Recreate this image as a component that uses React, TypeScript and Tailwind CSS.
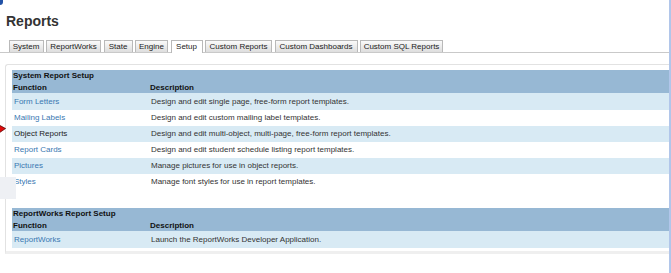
import React from "react";

const tabs = [
  { label: "System", w: "w-[35px]" },
  { label: "ReportWorks", w: "w-[55px]" },
  { label: "State", w: "w-[29px]" },
  { label: "Engine", w: "w-[33px]" },
  { label: "Setup", w: "w-[32px]", active: true },
  { label: "Custom Reports", w: "w-[67px]" },
  { label: "Custom Dashboards", w: "w-[83px]" },
  { label: "Custom SQL Reports", w: "w-[83px]" },
];

type Row = { fn: string; desc: string; dark?: boolean };

const systemRows: Row[] = [
  { fn: "Form Letters", desc: "Design and edit single page, free-form report templates." },
  { fn: "Mailing Labels", desc: "Design and edit custom mailing label templates." },
  { fn: "Object Reports", desc: "Design and edit multi-object, multi-page, free-form report templates.", dark: true },
  { fn: "Report Cards", desc: "Design and edit student schedule listing report templates." },
  { fn: "Pictures", desc: "Manage pictures for use in object reports." },
  { fn: "Styles", desc: "Manage font styles for use in report templates." },
];

const rwRows: Row[] = [{ fn: "ReportWorks", desc: "Launch the ReportWorks Developer Application." }];

function Table({ title, rows, heights }: { title: string; rows: Row[]; heights: string[] }) {
  return (
    <div className="w-[657px]">
      <div className="h-[23px] bg-[#97b8d4] pl-[1px] font-bold text-[8px] leading-[11.5px] text-[#111]">
        <div>{title}</div>
        <div className="grid grid-cols-[137px_1fr]">
          <div>Function</div>
          <div>Description</div>
        </div>
      </div>
      {rows.map((r, i) => (
        <div
          key={r.fn}
          className={`grid grid-cols-[137px_1fr] items-center pl-[2px] text-[8px] leading-[10px] ${heights[i]} ${
            i % 2 === 0 ? "bg-[#d8eaf4]" : "bg-white"
          }`}
        >
          <div className={r.dark ? "text-[#1d1d24]" : "text-[#3a78b2]"}>{r.fn}</div>
          <div className="text-[#333]">{r.desc}</div>
        </div>
      ))}
    </div>
  );
}

export default function App() {
  return (
    <div
      className="relative w-[671px] h-[273px] bg-white overflow-hidden flex flex-col"
      style={{ fontFamily: '"Liberation Sans", Arial, sans-serif' }}
    >
      <div className="mt-[13px] pl-[6px] text-[14px] leading-[16px] font-bold text-[#333]">Reports</div>

      <div className="mt-[11px] w-[669px] flex items-end pl-[8.5px] gap-[2.5px] border-b border-[#c9c9c9]">
        {tabs.map((t) => (
          <div
            key={t.label}
            className={`${t.w} text-center text-[8px] leading-[10px] pt-[1px] text-[#222] border border-b-0 border-[#b9b9b9] ${
              t.active ? "h-[13px] -mb-px bg-white" : "h-[12px] bg-linear-to-b from-[#fafafa] to-[#dedede]"
            }`}
          >
            {t.label}
          </div>
        ))}
      </div>

      <div className="ml-[5px] mt-[11px] w-[664px] border-t border-l border-[#e2e2e2] rounded-tl-[3px] pl-[6px] pt-[5px] pb-[3px] border-b-[3px] border-b-[#efefef]">
        <Table
          title="System Report Setup"
          rows={systemRows}
          heights={["h-[17px]", "h-[16px]", "h-[16px]", "h-[16px]", "h-[16px]", "h-[16px]"]}
        />
        <div className="mt-[18px]">
          <Table title="ReportWorks Report Setup" rows={rwRows} heights={["h-[17px]"]} />
        </div>
      </div>

      {/* overlays */}
      <div className="absolute left-0 top-0 w-[3px] h-[5px] rounded-br-[3px] bg-[#2252a6]" />
      <svg className="absolute left-0 top-[124px]" width="7" height="10" viewBox="0 0 7 10">
        <polygon points="-1,1 5.5,4.5 -1,9" fill="#e10a0a" stroke="#5a0000" strokeWidth="0.8" />
      </svg>
      <div className="absolute left-0 top-[177px] w-[16px] h-[22px] bg-[#eef0f4]" />
      <div className="absolute right-0 top-0 w-[2px] h-full bg-[#b1c6ea]" />
    </div>
  );
}
